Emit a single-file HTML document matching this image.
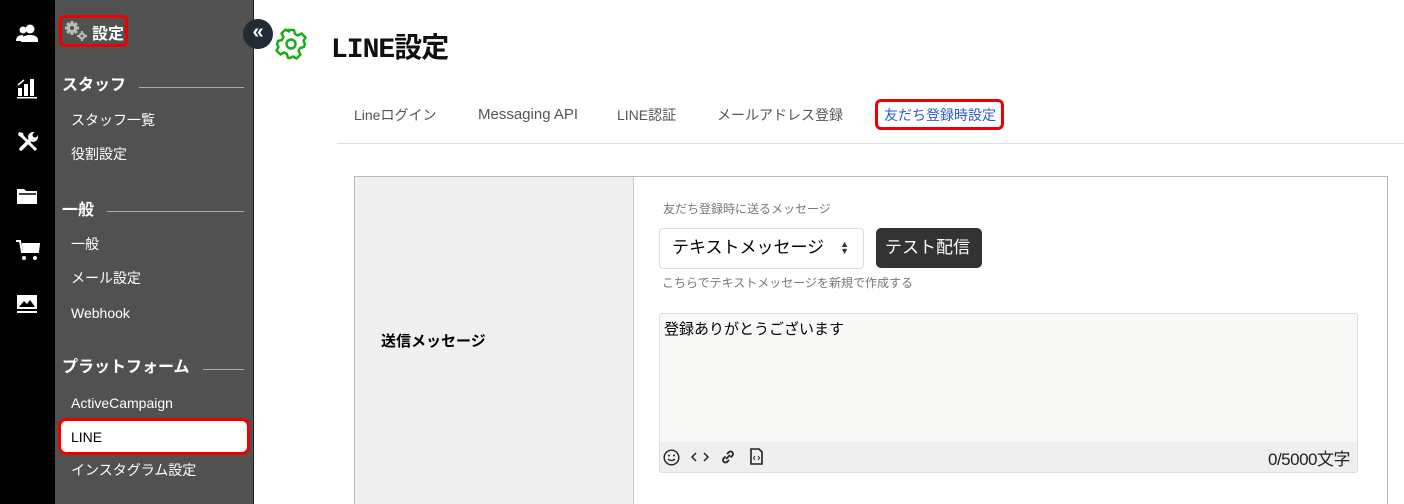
<!DOCTYPE html>
<html style="overflow:hidden;height:504px"><head><meta charset="utf-8"><style>
*{margin:0;padding:0;box-sizing:border-box}
body{width:1404px;height:504px;overflow:hidden;background:#fff;font-family:"Liberation Sans","Noto Sans CJK JP",sans-serif;position:relative}
.a{position:absolute}
.side{left:0;top:0;width:55px;height:504px;background:#000}
.menu{left:55px;top:0;width:199px;height:504px;background:#515151;border-right:1px solid #222}
.menu .h{position:absolute;left:7px;color:#fff;font-weight:bold;font-size:16px;line-height:20px}
.menu .ln{position:absolute;height:1px;background:#aaa;right:9px}
.menu .i{position:absolute;left:16px;color:#fff;font-size:14px;line-height:18px}
.tab{position:absolute;top:105px;font-size:14px;line-height:20px;color:#555}
</style></head><body>
<div class="a side">
 <svg class="a" style="left:16px;top:24px" width="22" height="18" viewBox="0 0 22 18"><circle cx="14" cy="5" r="4.5" fill="#fff"/><path d="M5 18q0-7 9-7t8 7z" fill="#fff"/><circle cx="7" cy="6" r="3.5" fill="#fff"/><path d="M0 17q0-6 7-6l1 6z" fill="#fff"/></svg>
 <svg class="a" style="left:17px;top:76px" width="20" height="23" viewBox="0 0 20 23"><rect x="1" y="12" width="4" height="8" fill="#fff"/><rect x="7" y="8" width="4" height="12" fill="#fff"/><rect x="13" y="3" width="4" height="17" fill="#fff"/><rect x="0" y="21" width="20" height="1.5" fill="#fff"/><path d="M1 9l6-5" stroke="#fff" stroke-width="1.5"/></svg>
 <svg class="a" style="left:17px;top:131px" width="22" height="22" viewBox="0 0 22 22"><path d="M4 18L15 7" stroke="#fff" stroke-width="3.5" stroke-linecap="round"/><circle cx="16" cy="6" r="5" fill="#fff"/><circle cx="18" cy="4" r="2.5" fill="#000"/><path d="M3 3l16 16" stroke="#fff" stroke-width="3"/><path d="M2 1l4 1 1 4-2 1-4-3z" fill="#fff"/></svg>
 <svg class="a" style="left:16px;top:186px" width="22" height="19" viewBox="0 0 22 19"><path d="M1 3h7l2 2h11v13H1z" fill="#fff"/><path d="M3 8h17" stroke="#000" stroke-width="1.5"/></svg>
 <svg class="a" style="left:16px;top:240px" width="24" height="20" viewBox="0 0 24 20"><path d="M0 1h4l2 11h16l1-8H6" fill="none" stroke="#fff" stroke-width="2"/><path d="M6 5h17l-2 7H7z" fill="#fff"/><circle cx="8" cy="18" r="2" fill="#fff"/><circle cx="19" cy="18" r="2" fill="#fff"/></svg>
 <svg class="a" style="left:17px;top:295px" width="20" height="19" viewBox="0 0 20 19"><rect x="0" y="0" width="20" height="14" fill="#fff"/><path d="M2 12l5-6 3 3 3-4 5 7z" fill="#000"/><rect x="0" y="16" width="20" height="2" fill="#fff"/></svg>
</div>
<div class="a menu">
 <div class="a" style="left:4px;top:15px;width:69px;height:32px;border:3px solid #e00;border-radius:5px"></div>
 <svg class="a" style="left:9px;top:20px" width="24" height="22" viewBox="0 0 24 22"><g fill="#bbb"><circle cx="8" cy="8" r="5"/><rect x="6.5" y="1" width="3" height="14"/><rect x="1" y="6.5" width="14" height="3"/><rect x="6.5" y="1" width="3" height="14" transform="rotate(45 8 8)"/><rect x="6.5" y="1" width="3" height="14" transform="rotate(-45 8 8)"/><circle cx="18" cy="16" r="3.5"/><rect x="17" y="11" width="2" height="10"/><rect x="13" y="15" width="10" height="2"/></g><circle cx="8" cy="8" r="2" fill="#515151"/><circle cx="18" cy="16" r="1.3" fill="#515151"/></svg>
 <div class="a" style="left:37px;top:20px;color:#fff;font-weight:bold;font-size:16px">設定</div>
 <div class="h" style="top:76px">スタッフ</div><div class="ln" style="top:87px;left:84px"></div>
 <div class="i" style="top:111px">スタッフ一覧</div>
 <div class="i" style="top:145px">役割設定</div>
 <div class="h" style="top:201px">一般</div><div class="ln" style="top:211px;left:52px"></div>
 <div class="i" style="top:235px">一般</div>
 <div class="i" style="top:269px">メール設定</div>
 <div class="i" style="top:304px">Webhook</div>
 <div class="h" style="top:358px">プラットフォーム</div><div class="ln" style="top:369px;left:148px"></div>
 <div class="i" style="top:394px">ActiveCampaign</div>
 <div class="a" style="left:3px;top:418px;width:192px;height:37px;border:3px solid #e00;border-radius:8px;background:#fff"></div>
 <div class="i" style="top:428px;color:#000">LINE</div>
 <div class="i" style="top:461px">インスタグラム設定</div>
</div>
<div class="a" style="left:243px;top:19px;width:30px;height:30px;border-radius:50%;background:#222a33;color:#fff;font-weight:bold;font-size:20px;line-height:27px;text-align:center">«</div>
<svg class="a" style="left:275px;top:28px" width="32" height="32" viewBox="0 0 32 32"><path d="M13 2h6l1 4 3 1.5 3.5-2 4 4-2 3.5L30 16l-1 3-4 1-1.5 3 2 3.5-4 4-3.5-2L15 30h-2l-1-4-3-1.5-3.5 2-4-4 2-3.5L2 16l1-3 4-1 1.5-3-2-3.5 4-4 3.5 2z" fill="none" stroke="#1aad19" stroke-width="2.5" stroke-linejoin="round"/><circle cx="16" cy="16" r="4.5" fill="none" stroke="#1aad19" stroke-width="2.5"/></svg>
<div class="a" style="left:331px;top:26px;font-size:28px;font-family:'Liberation Mono','Noto Sans CJK JP',monospace;font-weight:bold;color:#111;letter-spacing:-1px">LINE設定</div>
<div class="tab" style="left:354px">Lineログイン</div>
<div class="tab" style="left:478px;font-size:15px">Messaging API</div>
<div class="tab" style="left:617px">LINE認証</div>
<div class="tab" style="left:717px">メールアドレス登録</div>
<div class="a" style="left:875px;top:99px;width:129px;height:31px;border:3px solid #e00;border-radius:6px"></div>
<div class="tab" style="left:884px;color:#2a5bd7">友だち登録時設定</div>
<div class="a" style="left:337px;top:143px;width:1067px;height:1px;background:#ddd"></div>
<div class="a" style="left:354px;top:176px;width:1034px;height:328px;border:1px solid #bbb;border-bottom:none"></div>
<div class="a" style="left:355px;top:177px;width:279px;height:327px;background:#efefef;border-right:1px solid #ccc"></div>
<div class="a" style="left:381px;top:330px;font-weight:bold;font-size:15px">送信メッセージ</div>
<div class="a" style="left:663px;top:200px;font-size:12px;color:#777">友だち登録時に送るメッセージ</div>
<div class="a" style="left:659px;top:228px;width:205px;height:41px;border:1px solid #ddd;border-radius:4px;font-size:17px;line-height:20px;padding:9px 12px">テキストメッセージ<span style="position:absolute;right:14px;top:12px;font-size:9px;line-height:7px;color:#333">▲<br>▼</span></div>
<div class="a" style="left:876px;top:228px;width:106px;height:40px;background:#333;border-radius:5px;color:#fff;font-size:17px;line-height:40px;padding:0 9px">テスト配信</div>
<div class="a" style="left:662px;top:274px;font-size:12px;color:#777">こちらでテキストメッセージを新規で作成する</div>
<div class="a" style="left:659px;top:313px;width:699px;height:160px;border:1px solid #ddd;border-radius:3px;background:#f8f8f6"></div>
<div class="a" style="left:664px;top:318px;font-size:15px">登録ありがとうございます</div>
<div class="a" style="left:660px;top:442px;width:697px;height:30px;background:#efefef"></div>
<svg class="a" style="left:663px;top:449px" width="17" height="17" viewBox="0 0 17 17"><circle cx="8.5" cy="8.5" r="7.3" fill="none" stroke="#222" stroke-width="1.4"/><circle cx="6" cy="6.5" r="1" fill="#222"/><circle cx="11" cy="6.5" r="1" fill="#222"/><path d="M5 10q3.5 3 7 0" fill="none" stroke="#222" stroke-width="1.3"/></svg>
<svg class="a" style="left:691px;top:451px" width="18" height="12" viewBox="0 0 18 12"><path d="M5 2L1 6l4 4M13 2l4 4-4 4" fill="none" stroke="#222" stroke-width="1.5"/></svg>
<svg class="a" style="left:720px;top:449px" width="16" height="16" viewBox="0 0 16 16"><g fill="none" stroke="#222" stroke-width="1.8"><path d="M7 5l2-2a2.5 2.5 0 013.5 3.5l-2 2"/><path d="M9 11l-2 2a2.5 2.5 0 01-3.5-3.5l2-2"/><path d="M6 10l4-4"/></g></svg>
<svg class="a" style="left:750px;top:448px" width="13" height="17" viewBox="0 0 13 17"><path d="M1 1h8l3 3v12H1z" fill="none" stroke="#222" stroke-width="1.6"/><path d="M5 8l-1.5 2L5 12M8 8l1.5 2L8 12" fill="none" stroke="#222" stroke-width="1"/></svg>
<div class="a" style="left:1268px;top:445px;font-size:17px;color:#222;letter-spacing:-0.5px">0/5000文字</div>
</body></html>
